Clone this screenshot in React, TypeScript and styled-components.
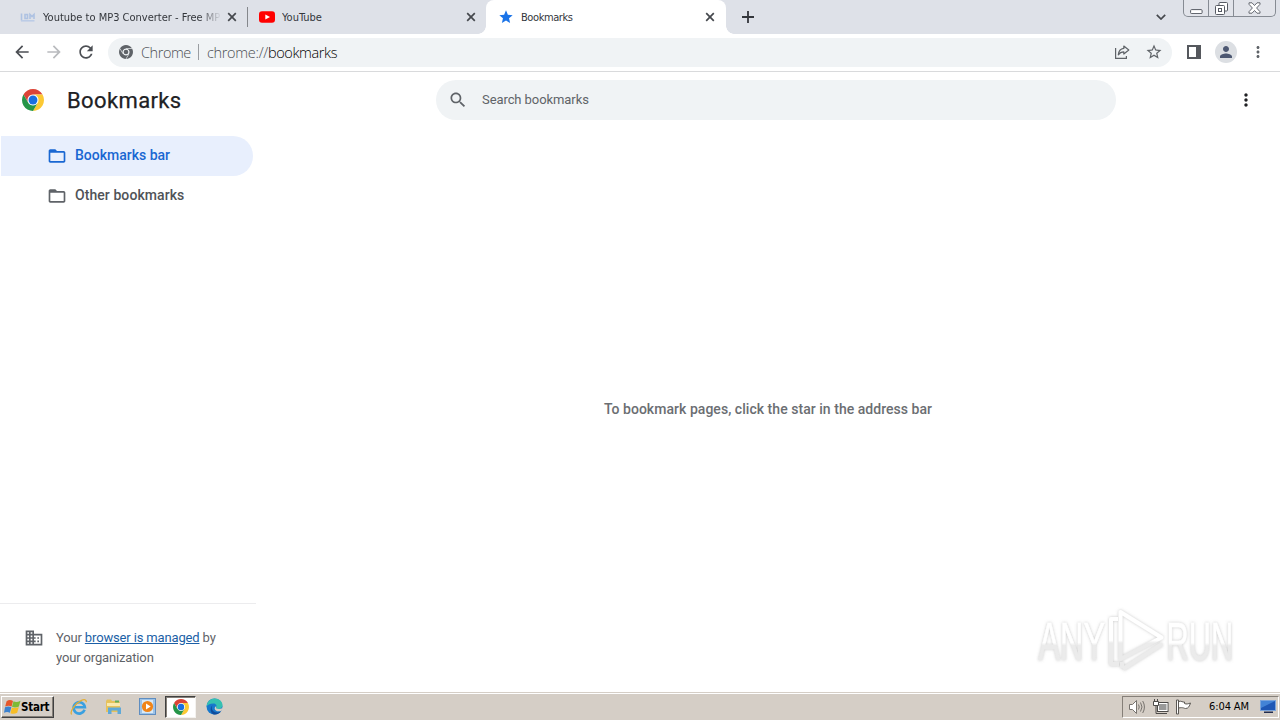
import React from "react";
import styled, { createGlobalStyle } from "styled-components";

const Global = createGlobalStyle`
  *, *::before, *::after { box-sizing: border-box; }
  body { margin: 0; background: #fff; overflow: hidden; font-family: Roboto, "Liberation Sans", sans-serif; }
  svg { display: block; flex: none; }
`;

const Desktop = styled.div`
  width: 1280px; height: 720px; display: flex; flex-direction: column; position: relative; overflow: hidden;
`;

/* Tab strip */
const TabStrip = styled.div`
  height: 34px; background: #dee1e8; display: flex; flex: none;
`;
const Tab = styled.div<{ $active?: boolean; $width: number; $pad: number }>`
  width: ${p => p.$width}px; height: 34px; padding-left: ${p => p.$pad}px; padding-right: ${p => (p.$active ? 11 : 10)}px;
  display: flex; align-items: center; position: relative;
  background: ${p => (p.$active ? "#fff" : "transparent")};
  border-radius: ${p => (p.$active ? "8px 8px 0 0" : "0")};
  &::before, &::after {
    content: ""; display: ${p => (p.$active ? "block" : "none")};
    position: absolute; bottom: 0; width: 8px; height: 8px;
  }
  &::before { left: -8px; background: radial-gradient(circle at 0 0, transparent 7.5px, #fff 8px); }
  &::after { right: -8px; background: radial-gradient(circle at 100% 0, transparent 7.5px, #fff 8px); }
`;
const TabTitle = styled.span<{ $fade?: boolean; $spacing?: number }>`
  font: 11px/16px "DejaVu Sans Condensed", "DejaVu Sans", sans-serif; font-stretch: condensed;
  letter-spacing: ${p => p.$spacing ?? 0}px; color: #33363b;
  flex: 1; margin: 0 7px; padding-top: 1px; white-space: nowrap; overflow: hidden;
  ${p => p.$fade && "mask-image: linear-gradient(90deg, #000 88%, transparent 101%);"}
`;
const TabDivider = styled.div`
  width: 1px; height: 20px; margin-top: 7px; background: #84878c;
`;
const NewTab = styled.div`
  width: 44px; display: flex; align-items: center; justify-content: center;
`;
const TabSearch = styled.div`
  margin-left: auto; width: 24px; margin-right: 10px; display: flex; align-items: center; justify-content: center;
`;
const WindowButtons = styled.div`
  display: flex; height: 17px; width: 93px; margin-right: 4px;
  border: 1px solid #868b93; border-top: 0; border-radius: 0 0 5px 5px; background: #e2e4ea;
`;
const WindowButton = styled.div<{ $width: number }>`
  width: ${p => p.$width}px; display: flex; align-items: center; justify-content: center;
  & + & { border-left: 1px solid #868b93; }
`;

/* Toolbar */
const Toolbar = styled.div`
  height: 38px; flex: none; display: flex; align-items: center; padding: 0 12px 1px; border-bottom: 1px solid #d9dadc; background: #fff;
`;
const NavGroup = styled.div`
  display: flex; gap: 12px; margin-right: 12px;
`;
const Omnibox = styled.div`
  width: 1064px; height: 29px; border-radius: 15px; background: #f0f3f5; display: flex; align-items: center; padding: 0 9px 0 11px;
`;
const UrlText = styled.span<{ $color: string; $spacing: number; $gap?: number }>`
  font: 300 14.5px/20px "Open Sans", "Noto Sans", sans-serif; color: ${p => p.$color}; letter-spacing: ${p => p.$spacing}px;
  margin-left: ${p => p.$gap ?? 0}px; padding-top: 1px; white-space: nowrap;
`;
const UrlDivider = styled.div`
  width: 1px; height: 16px; background: #9a9da1; margin: 0 8px 0 7px;
`;
const OmniActions = styled.div`
  margin-left: auto; display: flex; gap: 15px; align-items: center;
`;
const ToolbarActions = styled.div`
  display: flex; align-items: center; margin-left: 15px;
`;
const Avatar = styled.div`
  width: 22px; height: 22px; margin: 0 12px 0 14px; border-radius: 50%; background: #dcdfe3; display: flex; align-items: center; justify-content: center;
`;

/* Page */
const PageHeader = styled.header`
  height: 56px; flex: none; display: flex; align-items: center; padding: 0 24px 0 22px;
`;
const PageTitle = styled.h1`
  margin: 0 0 0 23px; padding-top: 1px; width: 369px; font: 400 22px/28px Roboto, sans-serif; letter-spacing: 0.38px; color: #202124; -webkit-text-stroke: 0.25px #202124;
`;
const SearchField = styled.div`
  width: 680px; height: 40px; border-radius: 20px; background: #f0f3f5; display: flex; align-items: center; padding-left: 12px; gap: 14px;
`;
const SearchPlaceholder = styled.span`
  font-size: 13px; line-height: 16px; letter-spacing: -0.08px; color: #5f6368;
`;
const HeaderMenu = styled.div`
  margin-left: auto; width: 20px; display: flex; justify-content: center;
`;
const PageBody = styled.div`
  flex: 1; display: flex; min-height: 0;
`;
const Sidebar = styled.nav`
  width: 256px; display: flex; flex-direction: column; padding-top: 8px;
`;
const Folder = styled.div<{ $selected?: boolean }>`
  width: 252px; height: 40px; margin-left: 1px; padding-left: 46px; display: flex; align-items: center; gap: 8px;
  border-radius: 0 20px 20px 0; background: ${p => (p.$selected ? "#e8effd" : "transparent")};
`;
const FolderName = styled.span<{ $selected?: boolean; $spacing: number }>`
  font: 500 14px/20px Roboto, sans-serif; letter-spacing: ${p => p.$spacing}px; padding-bottom: 2px;
  color: ${p => (p.$selected ? "#1967d2" : "#505357")};
`;
const ManagedNotice = styled.footer`
  margin-top: auto; height: 89px; border-top: 1px solid #ececee; display: flex; padding: 24px 0 0 24px; gap: 12px;
`;
const ManagedText = styled.p`
  margin: 0; font: 13px/20px Roboto, sans-serif; letter-spacing: -0.15px; color: #5f6368;
  a { color: #1b5fa6; text-decoration: underline; }
`;
const EmptyState = styled.main`
  flex: 1; display: flex; align-items: center; justify-content: center; padding-bottom: 3px;
  font: 500 14px/20px Roboto, sans-serif; letter-spacing: 0.04px; color: #6b6e72;
`;

/* Taskbar */
const Taskbar = styled.div`
  height: 28px; flex: none; background: #d5cec6; border-top: 1px solid #d5cec6; box-shadow: inset 0 1px 0 #fff;
  display: flex; align-items: center; padding: 0 1px 0 1px;
`;
const StartButton = styled.div`
  width: 53px; height: 22px; display: flex; align-items: center; padding-left: 2px; background: #d5cec6;
  border: 1px solid; border-color: #fff #404040 #404040 #fff; box-shadow: inset -1px -1px 0 #857f78;
  font: bold 11.5px/16px "DejaVu Sans Condensed", "DejaVu Sans", sans-serif; font-stretch: condensed; letter-spacing: -0.25px; color: #000;
`;
const QuickLaunch = styled.div`
  display: flex; align-items: center; margin-left: 8px;
`;
const LaunchItem = styled.div<{ $active?: boolean }>`
  width: 34px; height: 22px; display: flex; align-items: center; justify-content: center;
  ${p => p.$active && "width: 31px; margin: 0 1px 0 1px; background: #fff; border: 1px solid; border-color: #404040 #f4f2ef #f4f2ef #404040; box-shadow: inset 1px 1px 0 #857f78;"}
`;
const Tray = styled.div`
  margin-left: auto; width: 157px; height: 22px; display: flex; align-items: center; padding: 0 2px 0 5px;
  border: 1px solid; border-color: #857f78 #fff #fff #857f78;
`;
const TrayIcons = styled.div`
  display: flex; gap: 6px;
`;
const Clock = styled.span`
  margin: 0 auto; padding-left: 6px; font: 11px/16px "DejaVu Sans Condensed", "DejaVu Sans", sans-serif; font-stretch: condensed; letter-spacing: -0.1px; color: #000; white-space: nowrap;
`;

/* Watermark floating over the page */
const Watermark = styled.div`
  position: absolute; left: 1036px; top: 606px; width: 200px; height: 70px;
`;

const Icon = ({ d, size, color = "#5f6368" }: { d: string; size: number; color?: string }) => (
  <svg width={size} height={size} viewBox="0 0 24 24" fill={color}><path d={d} /></svg>
);

const paths = {
  back: "M20 11H7.83l5.59-5.59L12 4l-8 8 8 8 1.41-1.41L7.83 13H20v-2z",
  forward: "M12 4l-1.41 1.41L16.17 11H4v2h12.17l-5.58 5.59L12 20l8-8z",
  reload: "M17.65 6.35C16.2 4.9 14.21 4 12 4c-4.42 0-7.99 3.58-7.99 8s3.57 8 7.99 8c3.73 0 6.84-2.55 7.73-6h-2.08c-.82 2.33-3.04 4-5.65 4-3.31 0-6-2.69-6-6s2.69-6 6-6c1.66 0 3.14.69 4.22 1.78L13 11h7V4l-2.35 2.35z",
  star: "M12 17.27L18.18 21l-1.64-7.03L22 9.24l-7.19-.61L12 2 9.19 8.63 2 9.24l5.46 4.73L5.82 21z",
  starOutline: "M22 9.24l-7.19-.62L12 2 9.19 8.63 2 9.24l5.46 4.73L5.82 21 12 17.27 18.18 21l-1.63-7.03L22 9.24zM12 15.4l-3.76 2.27 1-4.28-3.32-2.88 4.38-.38L12 6.1l1.71 4.04 4.38.38-3.32 2.88 1 4.28L12 15.4z",
  dots: "M12 8c1.1 0 2-.9 2-2s-.9-2-2-2-2 .9-2 2 .9 2 2 2zm0 2c-1.1 0-2 .9-2 2s.9 2 2 2 2-.9 2-2-.9-2-2-2zm0 6c-1.1 0-2 .9-2 2s.9 2 2 2 2-.9 2-2-.9-2-2-2z",
  search: "M15.5 14h-.79l-.28-.27C15.41 12.59 16 11.11 16 9.5 16 5.91 13.09 3 9.5 3S3 5.91 3 9.5 5.91 16 9.5 16c1.61 0 3.09-.59 4.23-1.57l.27.28v.79l5 4.99L20.49 19l-4.99-5zm-6 0C7.01 14 5 11.99 5 9.5S7.01 5 9.5 5 14 7.01 14 9.5 11.99 14 9.5 14z",
  folder: "M20 6h-8l-2-2H4c-1.1 0-1.99.9-1.99 2L2 18c0 1.1.9 2 2 2h16c1.1 0 2-.9 2-2V8c0-1.1-.9-2-2-2zm0 12H4V8h16v10z",
  business: "M12 7V3H2v18h20V7H12zM6 19H4v-2h2v2zm0-4H4v-2h2v2zm0-4H4V9h2v2zm0-4H4V5h2v2zm4 12H8v-2h2v2zm0-4H8v-2h2v2zm0-4H8V9h2v2zm0-4H8V5h2v2zm10 12h-8v-2h2v-2h-2v-2h2v-2h-2V9h8v10zm-2-8h-2v2h2v-2zm0 4h-2v2h2v-2z",
  person: "M12 12c2.21 0 4-1.79 4-4s-1.79-4-4-4-4 1.79-4 4 1.79 4 4 4zm0 2c-2.67 0-8 1.34-8 4v2h16v-2c0-2.66-5.33-4-8-4z",
};

const ChromeLogo = ({ size, mono }: { size: number; mono?: boolean }) => (
  <svg width={size} height={size} viewBox="0 0 48 48">
    <circle cx="24" cy="24" r="13" fill={mono ? "#f0f3f5" : "#fff"} />
    <path fill={mono ? "#5f6368" : "#dc4437"} d="M24 12H44.78A24 24 0 0 0 3.22 12L13.61 30A12 12 0 0 1 24 12Z" />
    <path fill={mono ? "#5f6368" : "#fcc934"} d="M34.39 30L24 48A24 24 0 0 0 44.78 12H24A12 12 0 0 1 34.39 30Z" />
    <path fill={mono ? "#5f6368" : "#259548"} d="M13.61 30L3.22 12A24 24 0 0 0 24 48L34.39 30A12 12 0 0 1 13.61 30Z" />
    {mono && <path d="M24 12H45M13.61 30L3.22 12M34.39 30L24 48" stroke="#f0f3f5" strokeWidth="2" />}
    <circle cx="24" cy="24" r={mono ? 8 : 9.7} fill={mono ? "#5f6368" : "#1a6fe0"} />
  </svg>
);

const Close = () => (
  <svg width="10" height="10" viewBox="0 0 10 10"><path d="M1.2 1.2l7.6 7.6M8.8 1.2L1.2 8.8" stroke="#45484d" strokeWidth="1.7" /></svg>
);

const ConverterIcon = () => (
  <svg width="16" height="16" viewBox="0 0 16 16" fill="none" stroke="#aec2e2" strokeWidth="1.6">
    <path d="M1.5 4.500v7M5 5.500v4h2.500v-4zM10 10V5.500l2 2 2-2V10" /><path d="M1 11.800h13.500" stroke="#bccce6" />
  </svg>
);

const YouTubeIcon = () => (
  <svg width="16" height="16" viewBox="0 0 16 16"><rect y="2.200" width="16" height="11.600" rx="3" fill="#f00" /><path d="M6.300 5.400v5.200L11 8z" fill="#fff" /></svg>
);

const ShareIcon = () => (
  <svg width="16" height="16" viewBox="0 0 16 16" fill="none" stroke="#5f6368" strokeWidth="1.200">
    <path d="M1.600 4v10.400h10.800v-2.400" /><path d="M9.800 2l5 4-5 4V7.800C7.300 7.800 5.600 8.800 4.300 10.800 4.600 7.500 6.800 4.800 9.800 4.400z" strokeLinejoin="round" />
  </svg>
);

const SidePanelIcon = () => (
  <svg width="14" height="14" viewBox="0 0 14 14"><path fill="#55585d" fillRule="evenodd" d="M0 0h14v14H0zM2 2v10h7V2z" /></svg>
);

const MinimizeGlyph = () => (
  <svg width="13" height="12" viewBox="0 0 13 12"><rect x=".6" y="7.600" width="11.500" height="4" rx="1" fill="#fff" stroke="#565a63" /></svg>
);
const RestoreGlyph = () => (
  <svg width="13" height="13" viewBox="0 0 13 13" fill="#fff" stroke="#565a63"><rect x="4" y=".5" width="8.500" height="8.500" rx="1" /><rect x=".5" y="3.500" width="9" height="9" rx="1" /><rect x="3.500" y="6.500" width="3" height="3" /></svg>
);
const CloseGlyph = () => (
  <svg width="13" height="12" viewBox="0 0 13 12"><path d="M1 .8h3l2.500 2.700L9 .8h3v1.500L8.600 6l3.400 3.700v1.500H9L6.500 8.500 4 11.200H1V9.700L4.400 6 1 2.300z" fill="#fff" stroke="#565a63" strokeWidth=".9" /></svg>
);

const StartFlag = () => (
  <svg width="17" height="16" viewBox="0 0 17 16">
    <path d="M2.600 2.200C5 .5 7.300 1 9 2L7.600 7.500C5.600 6.600 3.800 6.600 1.200 7.500z" fill="#e6572a" />
    <path d="M9.500 2.300c2.200 1 4.400.8 7-.6l-1.600 5.700c-2.200 1.200-4.600 1.300-6.900.4z" fill="#7dba36" />
    <path d="M1 8.200C3.300 7.200 5.300 7.200 7.400 8.100l-1.500 5.700C4 12.800 2.200 12.800 0 13.800z" fill="#3c82cf" />
    <path d="M7.900 8.400c2.200.9 4.600.9 6.900-.4l-1.600 5.800c-2.200 1.300-4.500 1.300-6.800.4z" fill="#f7bd26" />
  </svg>
);
const IEIcon = () => (
  <svg width="18" height="18" viewBox="0 0 18 18" fill="none">
    <path d="M14.600 11.800A5.700 5.700 0 1 1 14.900 9.200H5" stroke="#3aa0e0" strokeWidth="2.600" />
    <path d="M1.600 16.500C-.5 13.500 5 5.500 11 2.600c3.500-1.700 5.500-1 5.300 1.600" stroke="#e3ae35" strokeWidth="1.300" />
  </svg>
);
const ExplorerIcon = () => (
  <svg width="17" height="17" viewBox="0 0 17 17">
    <path d="M1 3l1-1.500h4L7 3h7l1 1.500V14H1z" fill="#e6c25c" /><path d="M2 5h13v3H2z" fill="#f9e9ad" />
    <path d="M10 2.500h4v2h-4z" fill="#63ae57" /><path d="M3 16V9.500h13V16h-3.500v-3.500H6.500V16z" fill="#5fa9d8" />
  </svg>
);
const MediaIcon = () => (
  <svg width="17" height="17" viewBox="0 0 17 17">
    <rect x=".5" y=".5" width="16" height="16" fill="#9dc3e7" stroke="#5f8dc0" /><rect x="3" y="2" width="11" height="13" fill="#d8e9f7" />
    <circle cx="8.500" cy="8.500" r="5.600" fill="#f08519" /><path d="M7 5.500v6l4.700-3z" fill="#fff" />
  </svg>
);
const EdgeIcon = () => (
  <svg width="17" height="17" viewBox="0 0 17 17">
    <circle cx="8.500" cy="8.500" r="8" fill="#1678cc" />
    <path d="M.6 8.500C1 3.500 4.500.5 8.700.5c4.500 0 7.800 3.200 7.800 6.600 0 2.700-2.200 3.900-4.200 3.900-1.900 0-2.500-.8-2-1.600.7-1.200.2-3.900-3-3.900C3.800 5.500 1.200 7 .6 8.500z" fill="#35c1b1" />
    <path d="M6.500 7.200c-2 3.300.5 7.500 5 7.200 1.800-.1 3-.9 3.700-1.400-1.500 2.600-4.500 4-7.500 3.400C4.200 15 3.600 9.500 6.500 7.200z" fill="#104c9b" />
    <path d="M10.200 9.200c-.7 1.300 1.800 2.700 6.300.7-.2 1-.5 2-1 2.800-3.400 1.500-6.600.3-6.800-1.900-.1-1 .5-2 1.300-2.500.4.200.4.600.2.900z" fill="#d5cec6" />
  </svg>
);

const SpeakerIcon = () => (
  <svg width="18" height="16" viewBox="0 0 18 16" fill="none" stroke="#77736e">
    <path d="M1.500 5.500h3l4-4v13l-4-4h-3z" fill="#fff" /><path d="M10.500 5.500q1.500 2.500 0 5M12.500 3.500q3 4.500 0 9M14.700 2q3.500 6 0 12" />
  </svg>
);
const NetworkIcon = () => (
  <svg width="17" height="16" viewBox="0 0 17 16" stroke="#4c4a48">
    <rect x="5.500" y="3.500" width="10.500" height="9" fill="#8f8e8c" /><rect x="6.500" y="4.500" width="8.500" height="7" fill="#999" stroke="#fff" />
    <path d="M7 14.500h8" /><path d="M1.500 2.500h5v4h-5z" fill="#fff" /><path d="M2.500 0v2M5.500 0v2M4 7v7.500h3" fill="none" />
  </svg>
);
const FlagIcon = () => (
  <svg width="17" height="16" viewBox="0 0 17 16" stroke="#5a5753">
    <path d="M3.500 2.500c3-1 4 1 6 .5v1.500c2 1 3.500.3 6-.5-1 3-2 5.500-5 5.500-1.500 0-2-1.500-7-.5z" fill="#fff" /><path d="M1.500 1v14h2V1z" fill="#fff" />
  </svg>
);
const MonitorIcon = () => (
  <svg width="16" height="14" viewBox="0 0 16 14">
    <rect width="16" height="11" fill="#7ba4db" /><path d="M1 1h14v9H1z" fill="#1f57b5" /><path d="M1 1h14L1 8z" fill="#4383d6" /><path d="M4 11.500h9v1.500H4z" fill="#202c50" />
  </svg>
);

const WatermarkArt = () => (
  <svg width="200" height="70" viewBox="0 0 200 70">
    <defs>
      <filter id="halo" x="-10%" y="-20%" width="120%" height="140%"><feDropShadow dx="0" dy="0" stdDeviation="1.800" floodColor="#8c8c8c" floodOpacity=".5" /></filter>
      <linearGradient id="fade" gradientUnits="userSpaceOnUse" x1="0" y1="0" x2="0" y2="70"><stop offset=".49" stopColor="#fff" /><stop offset=".53" stopColor="#ebebeb" /></linearGradient>
      <linearGradient id="fadeText" x1="0" y1="0" x2="0" y2="1"><stop offset=".53" stopColor="#fff" /><stop offset=".58" stopColor="#ebebeb" /></linearGradient>
    </defs>
    <g filter="url(#halo)" fontFamily="'Liberation Sans', sans-serif" fill="url(#fadeText)" stroke="url(#fadeText)" strokeWidth=".6">
      <text transform="translate(2.500 53.500) scale(.61 1)" fontSize="53">ANY</text>
      <text transform="translate(130.500 53.500) scale(.58 1)" fontSize="53">RUN</text>
      <g fill="none" strokeWidth="4" strokeLinejoin="round" stroke="url(#fade)">
        <path d="M84.500 53V6l41 25.500z" /><path d="M82 13h-7v45h8M87 63l39-25M86 56v6" />
      </g>
    </g>
  </svg>
);

export default function App() {
  return (
    <Desktop>
      <Global />
      <TabStrip>
        <Tab $width={247} $pad={20}><ConverterIcon /><TabTitle $fade>Youtube to MP3 Converter - Free MP</TabTitle><Close /></Tab>
        <TabDivider />
        <Tab $width={238} $pad={11}><YouTubeIcon /><TabTitle>YouTube</TabTitle><Close /></Tab>
        <Tab $width={240} $pad={12} $active><Icon d={paths.star} size={16} color="#1a73e8" /><TabTitle $spacing={-0.42}>Bookmarks</TabTitle><Close /></Tab>
        <NewTab><svg width="12" height="12" viewBox="0 0 12 12"><path d="M6 0v12M0 6h12" stroke="#33363b" strokeWidth="1.800" /></svg></NewTab>
        <TabSearch><svg width="10" height="6" viewBox="0 0 10 6"><path d="M.8.8L5 5 9.200.8" fill="none" stroke="#45484d" strokeWidth="1.700" /></svg></TabSearch>
        <WindowButtons>
          <WindowButton $width={24}><MinimizeGlyph /></WindowButton>
          <WindowButton $width={25}><RestoreGlyph /></WindowButton>
          <WindowButton $width={42}><CloseGlyph /></WindowButton>
        </WindowButtons>
      </TabStrip>
      <Toolbar>
        <NavGroup>
          <Icon d={paths.back} size={20} color="#4c4f54" />
          <Icon d={paths.forward} size={20} color="#b9bbbe" />
          <Icon d={paths.reload} size={20} color="#4c4f54" />
        </NavGroup>
        <Omnibox>
          <ChromeLogo size={14} mono />
          <UrlText $color="#4c4f54" $spacing={-0.43} $gap={8}>Chrome</UrlText>
          <UrlDivider />
          <UrlText $color="#4c4f54" $spacing={-0.3}>chrome://</UrlText>
          <UrlText $color="#000" $spacing={-0.38}>bookmarks</UrlText>
          <OmniActions><ShareIcon /><Icon d={paths.starOutline} size={18} /></OmniActions>
        </Omnibox>
        <ToolbarActions>
          <SidePanelIcon />
          <Avatar><Icon d={paths.person} size={18} color="#4d5872" /></Avatar>
          <Icon d={paths.dots} size={18} />
        </ToolbarActions>
      </Toolbar>
      <PageHeader>
        <ChromeLogo size={22} />
        <PageTitle>Bookmarks</PageTitle>
        <SearchField><Icon d={paths.search} size={20} /><SearchPlaceholder>Search bookmarks</SearchPlaceholder></SearchField>
        <HeaderMenu><Icon d={paths.dots} size={20} color="#202124" /></HeaderMenu>
      </PageHeader>
      <PageBody>
        <Sidebar>
          <Folder $selected><Icon d={paths.folder} size={20} color="#1967d2" /><FolderName $selected $spacing={0}>Bookmarks bar</FolderName></Folder>
          <Folder><Icon d={paths.folder} size={20} /><FolderName $spacing={0.07}>Other bookmarks</FolderName></Folder>
          <ManagedNotice>
            <Icon d={paths.business} size={20} />
            <ManagedText>Your <a>browser is managed</a> by<br />your organization</ManagedText>
          </ManagedNotice>
        </Sidebar>
        <EmptyState>To bookmark pages, click the star in the address bar</EmptyState>
      </PageBody>
      <Taskbar>
        <StartButton><StartFlag />Start</StartButton>
        <QuickLaunch>
          <LaunchItem><IEIcon /></LaunchItem>
          <LaunchItem><ExplorerIcon /></LaunchItem>
          <LaunchItem><MediaIcon /></LaunchItem>
          <LaunchItem $active><ChromeLogo size={16} /></LaunchItem>
          <LaunchItem><EdgeIcon /></LaunchItem>
        </QuickLaunch>
        <Tray>
          <TrayIcons><SpeakerIcon /><NetworkIcon /><FlagIcon /></TrayIcons>
          <Clock>6:04 AM</Clock>
          <MonitorIcon />
        </Tray>
      </Taskbar>
      <Watermark><WatermarkArt /></Watermark>
    </Desktop>
  );
}
